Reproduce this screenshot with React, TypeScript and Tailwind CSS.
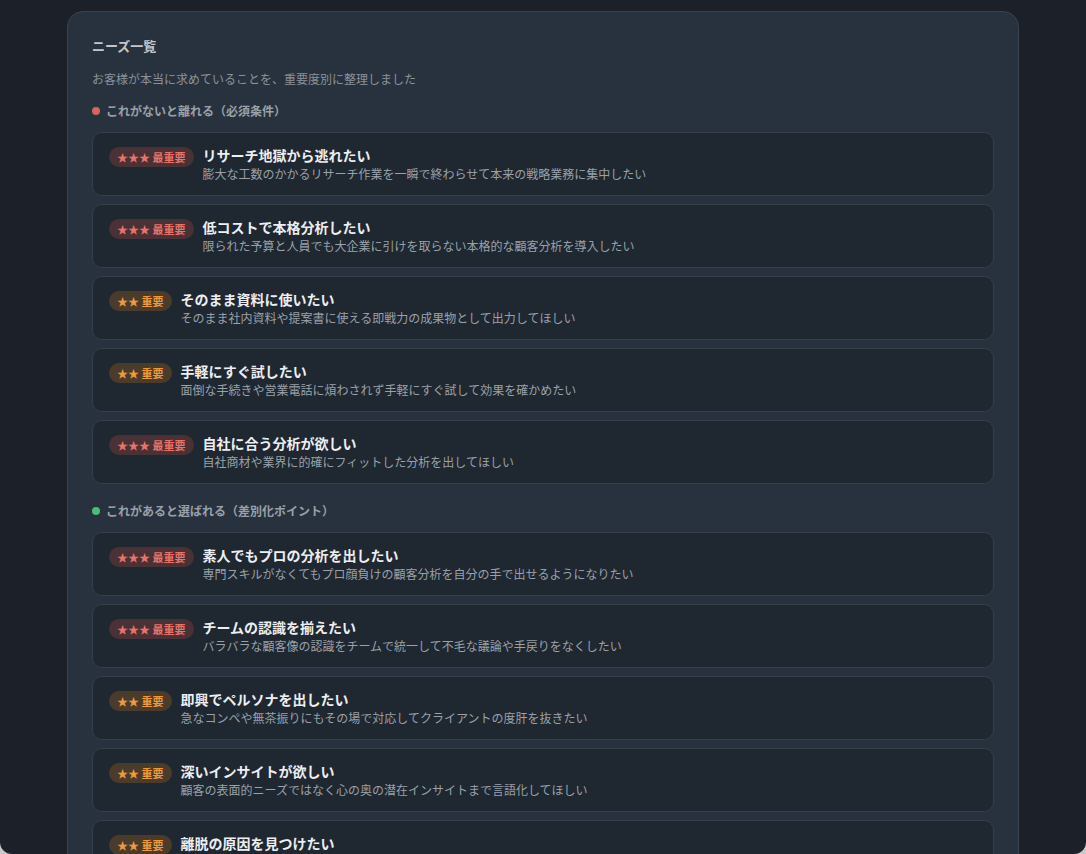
type Need = {
  level: 3 | 2;
  title: string;
  desc: string;
};

const mustHave: Need[] = [
  { level: 3, title: "リサーチ地獄から逃れたい", desc: "膨大な工数のかかるリサーチ作業を一瞬で終わらせて本来の戦略業務に集中したい" },
  { level: 3, title: "低コストで本格分析したい", desc: "限られた予算と人員でも大企業に引けを取らない本格的な顧客分析を導入したい" },
  { level: 2, title: "そのまま資料に使いたい", desc: "そのまま社内資料や提案書に使える即戦力の成果物として出力してほしい" },
  { level: 2, title: "手軽にすぐ試したい", desc: "面倒な手続きや営業電話に煩わされず手軽にすぐ試して効果を確かめたい" },
  { level: 3, title: "自社に合う分析が欲しい", desc: "自社商材や業界に的確にフィットした分析を出してほしい" },
];

const differentiators: Need[] = [
  { level: 3, title: "素人でもプロの分析を出したい", desc: "専門スキルがなくてもプロ顔負けの顧客分析を自分の手で出せるようになりたい" },
  { level: 3, title: "チームの認識を揃えたい", desc: "バラバラな顧客像の認識をチームで統一して不毛な議論や手戻りをなくしたい" },
  { level: 2, title: "即興でペルソナを出したい", desc: "急なコンペや無茶振りにもその場で対応してクライアントの度肝を抜きたい" },
  { level: 2, title: "深いインサイトが欲しい", desc: "顧客の表面的ニーズではなく心の奥の潜在インサイトまで言語化してほしい" },
  { level: 2, title: "離脱の原因を見つけたい", desc: "顧客が離れていく本当の理由を突き止めて先回りで手を打ちたい" },
];

function Badge({ level }: { level: 3 | 2 }) {
  if (level === 3) {
    return (
      <span className="mt-0.5 shrink-0 h-5 px-2 rounded-full bg-[#4a3135] text-[#e8736a] text-[11px] font-bold leading-5 whitespace-nowrap">
        ★★★ 最重要
      </span>
    );
  }
  return (
    <span className="mt-0.5 shrink-0 h-5 px-2 rounded-full bg-[#4a3b2b] text-[#eb9b3d] text-[11px] font-bold leading-5 whitespace-nowrap">
      ★★ 重要
    </span>
  );
}

function NeedCard({ need }: { need: Need }) {
  return (
    <div className="flex items-start gap-[9px] h-16 px-4 py-3 rounded-[10px] border border-[#343e4a] bg-[#1f2731]">
      <Badge level={need.level} />
      <div className="flex flex-col min-w-0">
        <span className="text-[14px] leading-5 font-bold text-[#eceef1]">{need.title}</span>
        <span className="text-[12px] leading-[18px] text-[#9aa1a9] whitespace-nowrap">{need.desc}</span>
      </div>
    </div>
  );
}

function Section({ dot, label, items }: { dot: string; label: string; items: Need[] }) {
  return (
    <div className="flex flex-col">
      <div className="flex items-center gap-1.5 h-4">
        <span className={`w-2 h-2 rounded-full ${dot}`} />
        <span className="text-[12px] leading-4 font-bold text-[#9aa0a8]">{label}</span>
      </div>
      <div className="flex flex-col gap-2 mt-[13px]">
        {items.map((n) => (
          <NeedCard key={n.title} need={n} />
        ))}
      </div>
    </div>
  );
}

export default function App() {
  return (
    <div
      className="w-full h-[854px] bg-[#c9c9c9]"
      style={{ fontFamily: '"Noto Sans CJK JP", "Noto Sans", sans-serif' }}
    >
      <div className="h-full rounded-b-[12px] bg-[#1b2029] overflow-hidden flex justify-center pt-[11px]">
        <div className="w-[952px] h-[900px] shrink-0 rounded-2xl border border-[#3a4451] bg-[#28323e] px-6 pt-6 flex flex-col">
          <h2 className="text-[13px] leading-5 font-bold text-[#c3c7cd]">ニーズ一覧</h2>
          <p className="mt-[14px] text-[12px] leading-[18px] text-[#8b919a]">
            お客様が本当に求めていることを、重要度別に整理しました
          </p>
          <div className="mt-[15px] flex flex-col gap-[19px]">
            <Section dot="bg-[#d4665c]" label="これがないと離れる（必須条件）" items={mustHave} />
            <Section dot="bg-[#4cbc78]" label="これがあると選ばれる（差別化ポイント）" items={differentiators} />
          </div>
        </div>
      </div>
    </div>
  );
}
